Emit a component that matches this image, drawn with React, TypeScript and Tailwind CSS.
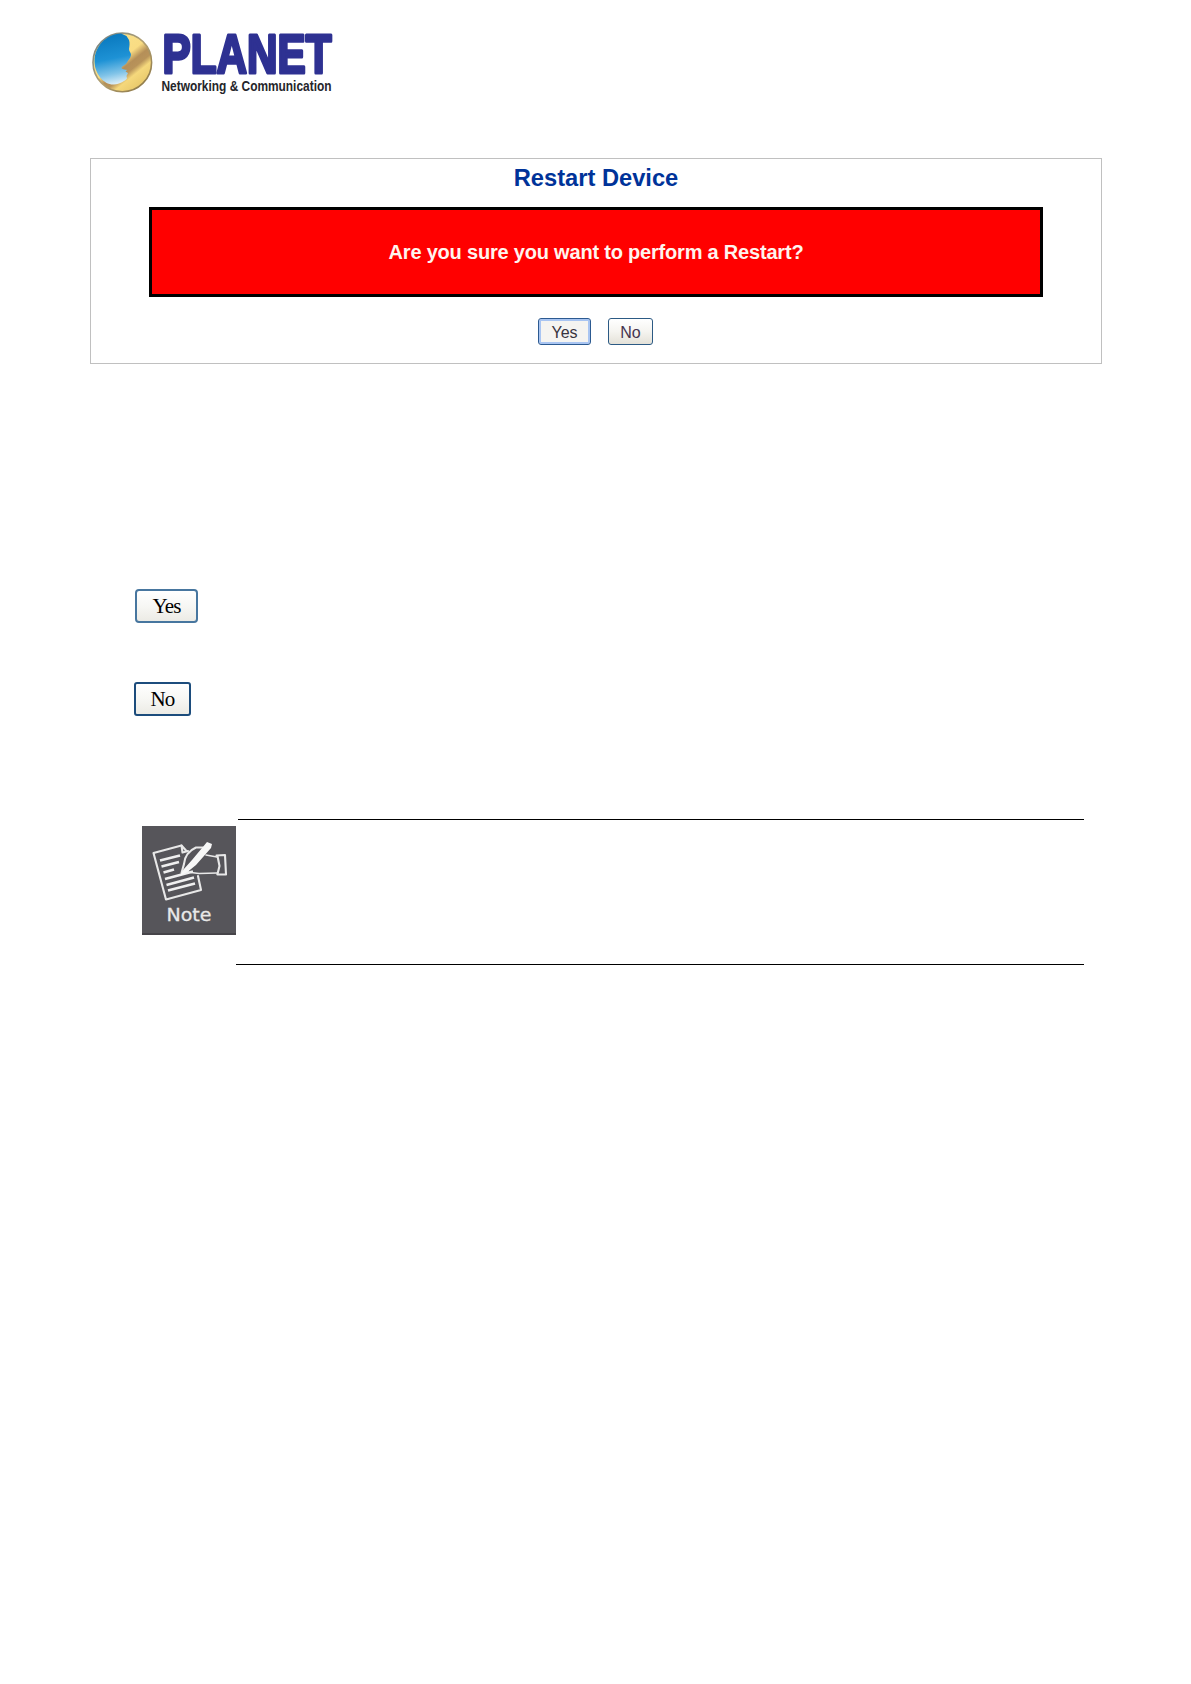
function PlanetLogo() {
  return (
    <svg width="260" height="70" viewBox="90 30 260 70" className="block overflow-visible">
      <defs>
        <linearGradient id="gold" x1="0.1" y1="0" x2="0.9" y2="1">
          <stop offset="0.2" stopColor="#f8e08a" />
          <stop offset="0.46" stopColor="#f9dc83" />
          <stop offset="0.57" stopColor="#b58f58" />
          <stop offset="0.65" stopColor="#b8935a" />
          <stop offset="0.73" stopColor="#f5d87c" />
          <stop offset="0.9" stopColor="#e8c86a" />
          <stop offset="1" stopColor="#8a6a32" />
        </linearGradient>
        <linearGradient id="sky" x1="0.35" y1="0" x2="0.5" y2="1">
          <stop offset="0" stopColor="#0877bd" />
          <stop offset="0.5" stopColor="#1e92d5" />
          <stop offset="0.8" stopColor="#82c4e8" />
          <stop offset="1" stopColor="#dceef8" />
        </linearGradient>
        <linearGradient id="rim" x1="0" y1="0" x2="1" y2="1">
          <stop offset="0" stopColor="#6d7f88" />
          <stop offset="0.5" stopColor="#b3a172" />
          <stop offset="1" stopColor="#86703f" />
        </linearGradient>
      </defs>
      <circle cx="122.3" cy="62.4" r="29.3" fill="url(#gold)" stroke="url(#rim)" strokeWidth="1.6" />
      <path
        d="M121 33.600 C106 34 94.500 47 94.500 61 C94.500 74 104 85 114 84.500 C120 84 125 81 127 78.500 L126.500 76 L128 73 L125.500 71.500 L127 70 C125 69.500 121.500 69.500 121.500 67.500 C122.500 65.500 126 65 127 62.500 C127.500 60.500 130.800 58 131 55 C131 52.500 129 51.500 129 49 C129.500 46 130 43 129 40 L126.500 36 Z"
        fill="url(#sky)"
      />
      <text
        x="162.500"
        y="72.700"
        textLength="169"
        lengthAdjust="spacingAndGlyphs"
        fill="#2e3192"
        stroke="#2e3192"
        strokeWidth="3.2"
        strokeLinejoin="round"
        className="font-['Liberation_Sans'] text-[55px] font-bold"
      >
        PLANET
      </text>
      <text
        x="161.500"
        y="91"
        textLength="170"
        lengthAdjust="spacingAndGlyphs"
        fill="#25252a"
        className="font-['Liberation_Sans'] text-[15.5px] font-bold"
      >
        Networking &amp; Communication
      </text>
    </svg>
  );
}

function NoteIcon() {
  return (
    <svg width="94" height="109" viewBox="142 826 94 109" className="block shrink-0">
      <rect x="142" y="826" width="94" height="109" fill="#56555a" />
      <rect x="142" y="933" width="94" height="2" fill="#464449" />
      <g fill="none" stroke="#e8e8e8" strokeWidth="2.1" strokeLinejoin="round" strokeLinecap="round">
        <path d="M186 850.500 L181.500 845.500 L153.500 853 L166 899.500 L201 890 L198 876" />
        <path d="M181.500 845.500 L182.500 852.500 L188 851" />
        <path d="M203 847.500 L196 847.500 C188 851 184.500 858 184 864 L181.500 873 L188 871" />
        <path d="M206 855 L217 857" strokeWidth="1.6" />
        <path d="M216.500 855.500 L225 855 L226 874.500 L217.500 874.500" />
        <path d="M217.500 856 L219.500 866 L217.500 874" />
        <path d="M191 872.500 L199 873.500 L217 873" strokeWidth="1.6" />
      </g>
      <g stroke="#efefef" strokeWidth="2.7">
        <path d="M160 860.500 L180 855.500 M161.500 866.500 L179 862 M163.500 872.500 L174 869.500 M165 879 L193 871.500 M166.500 885 L194 877.500 M168 890.500 L195 883.500" />
      </g>
      <path d="M207 842 L212 844 L211 848 L196 865 L188 871.500 L180 876 L183.500 869.500 L192 860Z" fill="#f7f7f7" />
      <text
        x="166.500"
        y="921"
        textLength="45"
        lengthAdjust="spacingAndGlyphs"
        fill="#e8e8e8"
        stroke="#e8e8e8"
        strokeWidth="0.3"
        className="font-['DejaVu_Sans'] text-[18.5px]"
      >
        Note
      </text>
    </svg>
  );
}

export default function App() {
  return (
    <main className="h-[1684px] w-[1191px] bg-white pt-[30px] font-['Liberation_Sans',sans-serif]">
      <header className="ml-[90px] h-[128px]">
        <PlanetLogo />
      </header>

      <section className="ml-[90px] flex h-[206px] w-[1012px] flex-col items-center border border-[#c0c0c0]">
        <h1 className="mt-[5px] h-[43px] text-[23.700px] leading-[28px] font-bold whitespace-nowrap text-[#003399]">
          Restart Device
        </h1>
        <div className="flex h-[90px] w-[894px] items-center justify-center border-[3.500px] border-black bg-[#ff0000] text-[20px] font-bold tracking-[-0.200px] whitespace-nowrap text-[#fff4ee]">
          <p className="leading-6">Are you sure you want to perform a Restart?</p>
        </div>
        <div className="mt-[21px] -ml-px flex gap-[17px]">
          <button className="h-[27px] w-[53px] rounded-[3px] border-[1.500px] border-[#2c5a91] bg-[#f5f4f1] pt-px text-[16px] leading-[23px] text-[#38333f] shadow-[inset_0_0_0_2px_#a9c5f2]">
            Yes
          </button>
          <button className="h-[27px] w-[45px] rounded-[3px] border-[1.500px] border-[#2c5a84] bg-linear-to-b from-white via-[#f5f4f0] to-[#e4e1d8] pt-px text-[16px] leading-[23px] text-[#45344f]">
            No
          </button>
        </div>
      </section>

      <div className="mt-[225px] ml-[134px] flex flex-col items-start gap-[59px] font-['Liberation_Serif',serif] text-[21px] tracking-[-0.800px] text-black">
        <button className="ml-px h-[34px] w-[63px] rounded-[4px] border-2 border-[#47769f] bg-linear-to-b from-white via-[#f7f7f4] to-[#ecebe5] leading-[28px]">
          Yes
        </button>
        <button className="h-[34px] w-[57px] rounded-[3px] border-2 border-[#1c4c7c] bg-linear-to-b from-white via-[#f7f7f4] to-[#ecebe5] leading-[28px]">
          No
        </button>
      </div>

      <section className="mt-[103px] ml-[142px] w-[942px]">
        <div className="ml-[96px] h-px bg-black" />
        <div className="mt-[6px] h-[138px]">
          <NoteIcon />
        </div>
        <div className="ml-[94px] h-px bg-black" />
      </section>
    </main>
  );
}
